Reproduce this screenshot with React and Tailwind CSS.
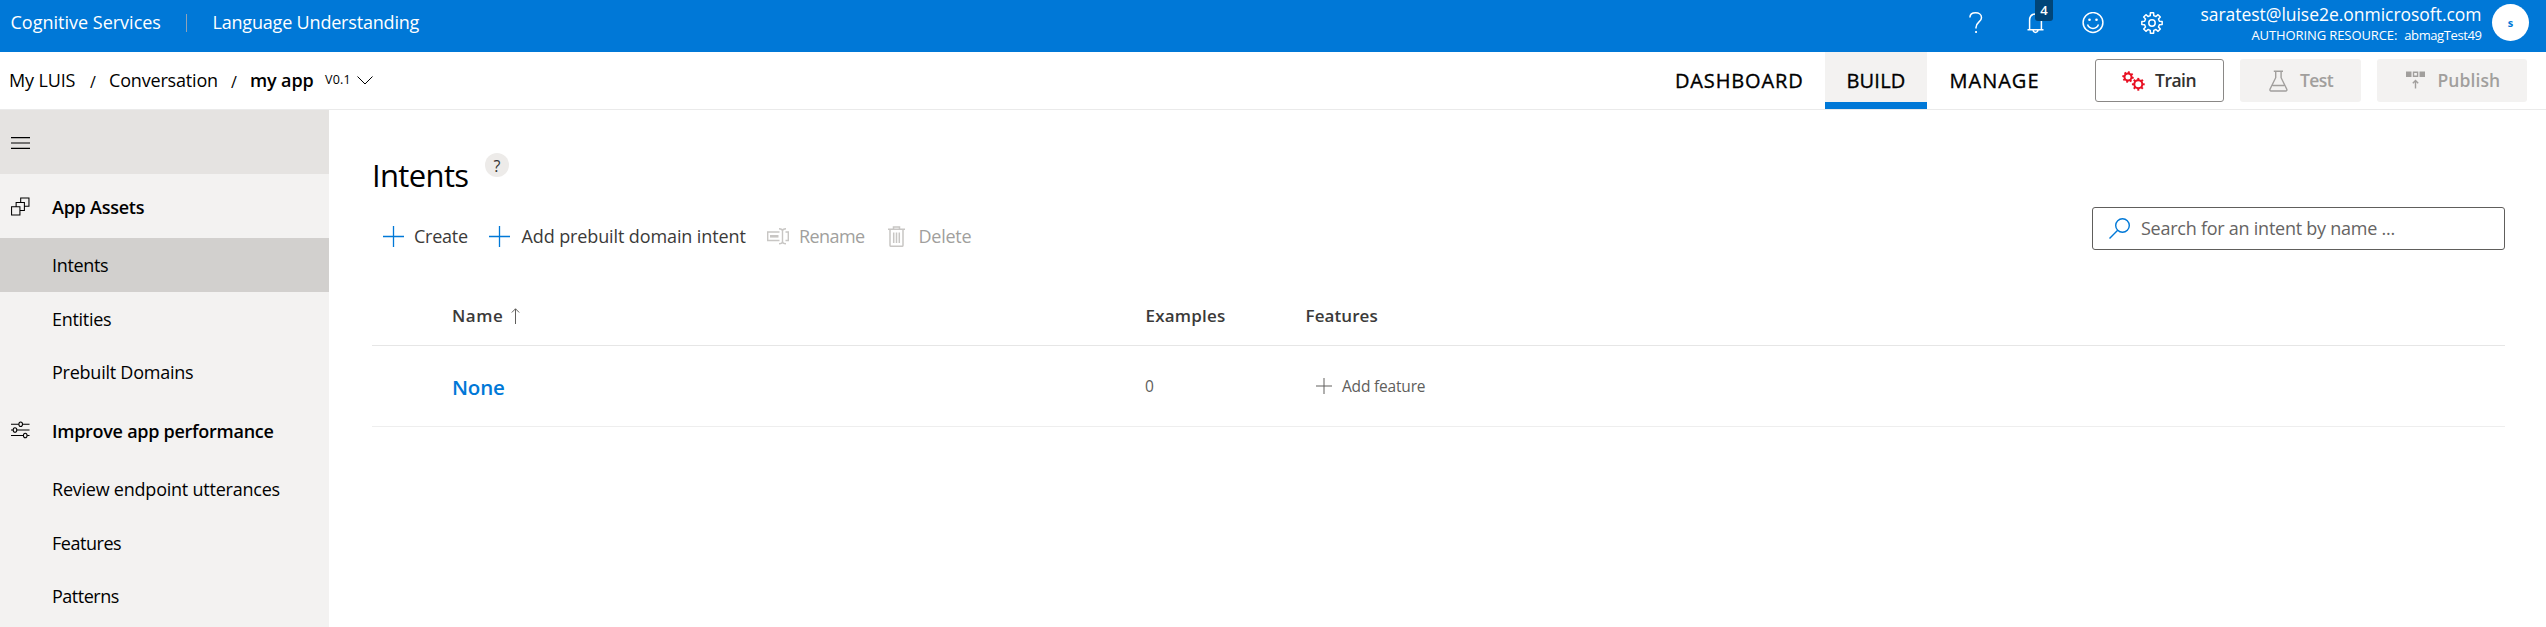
import React from "react";

function Gear({ className }) {
  const pts = [];
  const step = (Math.PI * 2) / 8;
  for (let i = 0; i < 8; i++) {
    const a = i * step;
    [
      [-0.3, 7.6],
      [-0.2, 10.3],
      [0.2, 10.3],
      [0.3, 7.6],
    ].forEach(([o, r]) => {
      const t = a + o * step;
      pts.push(`${(11 + r * Math.sin(t)).toFixed(2)},${(11 - r * Math.cos(t)).toFixed(2)}`);
    });
  }
  return (
    <svg viewBox="0 0 22 22" className={className} fill="none" stroke="currentColor" strokeWidth="1.5" strokeLinejoin="round">
      <polygon points={pts.join(" ")} />
      <circle cx="11" cy="11" r="3.2" />
    </svg>
  );
}

function TrainIcon() {
  const teeth = [0, 45, 90, 135, 180, 225, 270, 315];
  return (
    <svg viewBox="0 0 23 20" className="h-5 w-[23px] text-[#e81123]" fill="none" stroke="currentColor" strokeWidth="2">
      <circle cx="6" cy="6" r="3.500" />
      {teeth.map((a) => (
        <path key={a} d="M6 2.500V0.300" transform={`rotate(${a + 10} 6 6)`} />
      ))}
      <circle cx="16.300" cy="13.300" r="4" />
      {teeth.map((a) => (
        <path key={a} d="M16.300 9.300V6.900" transform={`rotate(${a} 16.300 13.300)`} />
      ))}
    </svg>
  );
}

function Plus({ className }) {
  return (
    <svg viewBox="0 0 21 21" className={className} fill="none" stroke="currentColor" strokeWidth="1.3">
      <path d="M10.5 0v21M0 10.5h21" />
    </svg>
  );
}

function Header() {
  return (
    <header className="flex h-[52px] bg-[#0078d7] text-white">
      <div className="flex h-11 flex-1 items-center pl-[10.500px] text-[18px]">
        <span className="w-[175.500px]">Cognitive Services</span>
        <span className="mt-[2px] h-[18px] w-px bg-[#8fa3b8]" />
        <span className="ml-[25.500px] tracking-[-0.19px]">Language Understanding</span>
      </div>
      <div className="flex pt-3">
        <svg viewBox="0 0 14 22" className="mr-[44px] h-[22px] w-[14px]" fill="none" stroke="currentColor" strokeWidth="1.5">
          <path d="M.9 5.4C1 2.400 3.400.8 6.600.8s5.900 1.800 5.900 4.900c0 4.300-5.500 4.300-5.500 9.800v1.100" />
          <path d="M6.200 20h1.700" strokeWidth="1.800" />
        </svg>
        <div className="relative mr-[38px] h-[22px] w-[17px]">
          <svg viewBox="0 0 17 22" className="h-[22px] w-[17px]" fill="none" stroke="currentColor" strokeWidth="1.5">
            <path d="M.5 17.800h16M2.600 17.800V8.500C2.600 4.500 5 2 8.500 2s5.900 2.500 5.900 6.500v9.300M6 18.200c.3 1.400 1.300 2.200 2.500 2.200s2.200-.8 2.500-2.200" />
          </svg>
          <span className="absolute -top-3 left-[8px] flex h-[21px] w-[18px] items-center justify-center rounded-b-[3px] bg-[#004578] text-[13px] font-semibold">4</span>
        </div>
        <svg viewBox="0 0 22 22" className="mr-[37px] h-[22px] w-[22px]" fill="none" stroke="currentColor" strokeWidth="1.5">
          <circle cx="11" cy="10.500" r="9.900" />
          <path d="M5.500 12.500c1 2.600 3 3.900 5.500 3.900s4.500-1.300 5.500-3.900" />
          <circle cx="7.500" cy="7.800" r="1.300" fill="currentColor" stroke="none" />
          <circle cx="14.500" cy="7.800" r="1.300" fill="currentColor" stroke="none" />
        </svg>
        <Gear className="mr-[37px] h-[22px] w-[22px]" />
      </div>
      <div className="flex w-[281.500px] flex-col items-end pt-1">
        <span className="whitespace-nowrap text-[17.5px] leading-5 tracking-[-0.03px]">saratest@luise2e.onmicrosoft.com</span>
        <div className="flex gap-[7px] whitespace-nowrap text-[13px] leading-[22px]">
          <span className="tracking-[-0.1px]">AUTHORING RESOURCE:</span>
          <span className="tracking-[-0.4px]">abmagTest49</span>
        </div>
      </div>
      <div className="ml-[10.500px] mr-[17px] mt-1 flex h-[37px] w-[37px] items-center justify-center rounded-full bg-white pt-[2px] text-[11px] font-bold text-[#0078d7]">s</div>
    </header>
  );
}

function NavBar() {
  return (
    <nav className="flex h-[58px] border-b border-[#eaeaea] bg-white text-black">
      <div className="flex flex-1 items-center pl-[9px] text-[18px]">
        <span className="w-[81px] tracking-[-0.15px]">My LUIS</span>
        <span className="w-[19px] pt-[2px] text-[16px]">/</span>
        <span className="w-[122px] tracking-[-0.18px]">Conversation</span>
        <span className="w-[19px] pt-[2px] text-[16px]">/</span>
        <span className="w-[75px] font-semibold tracking-[-0.13px]">my app</span>
        <span className="w-[31.500px] text-[12.5px] tracking-[0.2px]">V0.1</span>
        <svg viewBox="0 0 16 9" className="mt-[-1px] h-[9px] w-4" fill="none" stroke="currentColor" strokeWidth="1">
          <path d="M.5.5 8 8 15.500.5" />
        </svg>
      </div>
      <div className="flex text-[20px] font-medium leading-[57px] [-webkit-text-stroke:0.35px_black]">
        <span className="w-[150px] tracking-[0.85px]">DASHBOARD</span>
        <span className="flex h-[57px] w-[102px] justify-center border-b-[7px] border-[#0078d7] bg-[#f3f2f1] tracking-[0.24px]">BUILD</span>
        <span className="w-[168px] pl-[22.500px] tracking-[1px]">MANAGE</span>
      </div>
      <div className="mr-[19px] flex gap-4 pt-[7px] text-[17.5px] font-semibold">
        <div className="flex h-[43px] w-[129px] items-center rounded-[3px] border border-[#8a8886] pl-[26px] text-[#323130]">
          <TrainIcon />
          <span className="ml-[10px] tracking-[-0.49px]">Train</span>
        </div>
        <div className="flex h-[43px] w-[121px] items-center rounded-[3px] bg-[#f3f2f1] pl-[29px] text-[#a19f9d]">
          <svg viewBox="0 0 19 22" className="h-[22px] w-[19px]" fill="none" stroke="currentColor" strokeWidth="1.4">
            <path d="M4.800 1.200h9.200M6.700 1.200v6.500L1 19.300c-.3.900.1 1.700 1 1.700h14.800c.9 0 1.300-.8 1-1.700L12.100 7.700V1.200M3.700 15.500h11.400" />
          </svg>
          <span className="ml-[12px] tracking-[-0.6px]">Test</span>
        </div>
        <div className="flex h-[43px] w-[150px] items-center rounded-[3px] bg-[#f3f2f1] pl-[29px] text-[#a19f9d]">
          <svg viewBox="0 0 20 18" className="mt-[-2px] h-[18px] w-5" fill="none" stroke="currentColor" strokeWidth="1.400">
            <path d="M0 .5h5.500v5.500H0zM13.500.5H19v5.500h-5.500z" fill="currentColor" stroke="none" />
            <path d="M7.500 1.200h4.100v4.100H7.500zM9.500 17.500V9.500M6.800 12.200l2.700-2.700 2.700 2.700" />
          </svg>
          <span className="ml-[11.500px] tracking-[0.08px]">Publish</span>
        </div>
      </div>
    </nav>
  );
}

function Sidebar() {
  return (
    <aside className="h-[517px] w-[329px] bg-[#f3f2f1] text-[18px] text-black">
      <div className="flex h-16 items-center bg-[#e5e3e1] pl-[11px]">
        <svg viewBox="0 0 19 12" className="mt-[2px] h-3 w-[19px]" stroke="currentColor" strokeWidth="1.1">
          <path d="M0 .6h19M0 6h19M0 11.400h19" />
        </svg>
      </div>
      <div className="flex h-16 items-center pl-[11px] pt-[2px]">
        <svg viewBox="0 0 20 19" className="mt-[-2px] h-[19px] w-[19px]" fill="none" stroke="currentColor" strokeWidth="1.100">
          <path d="M.6 9.800h8.800v8.600H.6zM5.400 9.800V5.200h8.700v8.600H9.400M10.200 5.200V.6h8.700v8.600h-4.800" />
        </svg>
        <span className="ml-[22px] font-semibold tracking-[-0.25px]">App Assets</span>
      </div>
      <div className="flex h-[54px] items-center bg-[#d2d0ce] pl-[52px] tracking-[-0.34px]">Intents</div>
      <div className="flex h-[54px] items-center pl-[52px] tracking-[-0.3px]">Entities</div>
      <div className="flex h-[53px] items-center pl-[52px] tracking-[-0.24px]">Prebuilt Domains</div>
      <div className="flex h-[65px] items-center pl-[11px]">
        <svg viewBox="0 0 20 18" className="mt-[-3px] h-[18px] w-[19px]" fill="none" stroke="currentColor" strokeWidth="1.100">
          <path d="M0 3h8.300M12.200 3H19.500M0 9h2.300M6 9h13.500M0 14.800h13M17 14.800h2.500" />
          <ellipse cx="10.200" cy="3" rx="1.900" ry="2.400" />
          <ellipse cx="4.200" cy="9" rx="1.900" ry="2.400" />
          <ellipse cx="15" cy="14.800" rx="1.900" ry="2.400" />
        </svg>
        <span className="ml-[22px] font-semibold tracking-[-0.27px]">Improve app performance</span>
      </div>
      <div className="flex h-[52px] items-center pb-px pl-[52px] tracking-[-0.23px]">Review endpoint utterances</div>
      <div className="flex h-[54px] items-center pl-[52px] tracking-[-0.47px]">Features</div>
      <div className="flex h-[53px] items-center pl-[52px] tracking-[-0.5px]">Patterns</div>
    </aside>
  );
}

function Toolbar() {
  return (
    <div className="flex h-[43px] items-center pl-[11px] text-[18px] text-[#3b3a39]">
      <Plus className="h-[21px] w-[21px] text-[#0078d7]" />
      <span className="ml-[10px] w-[75px] tracking-[-0.24px]">Create</span>
      <Plus className="h-[21px] w-[21px] text-[#0078d7]" />
      <span className="ml-[11.500px] w-[245px] whitespace-nowrap tracking-[-0.11px]">Add prebuilt domain intent</span>
      <svg viewBox="0 0 22 17" className="h-[17px] w-[22px] text-[#c8c6c4]" fill="none" stroke="currentColor" strokeWidth="1.4">
        <path d="M12.500 4H.7v8.500h11.800M18.500 4h2.800v8.500h-2.800" />
        <path d="M3 8.300h8.500" strokeWidth="2.600" />
        <path d="M12 .8c2 0 3.500.6 3.500 2.200v10.500c0 1.600-1.500 2.300-3.500 2.300M19 .8c-2 0-3.500.6-3.500 2.200v10.500c0 1.600 1.500 2.300 3.500 2.300" />
      </svg>
      <span className="ml-[10.500px] w-[89px] tracking-[-0.58px] text-[#a19f9d]">Rename</span>
      <svg viewBox="0 0 17 21" className="h-[21px] w-[17px] text-[#c8c6c4]" fill="none" stroke="currentColor" strokeWidth="1.500">
        <path d="M0 3.200h17M5.500 3V1h6v2M2 3.500v15.700c0 .7.400 1.100 1.100 1.100h10.800c.7 0 1.100-.4 1.100-1.100V3.500M5.700 6.500v10.500M8.500 6.500v10.500M11.300 6.500v10.500" />
      </svg>
      <span className="ml-[13.500px] tracking-[-0.25px] text-[#a19f9d]">Delete</span>
    </div>
  );
}

function IntentsPage() {
  return (
    <main className="flex-1 bg-white pl-[43px] pr-[41px] pt-[43px]">
      <div className="flex justify-between">
        <div>
          <div className="mb-2 flex h-[54px]">
            <h1 className="w-[113px] text-[31px] font-normal leading-[44px] tracking-[-0.65px] text-black">Intents</h1>
            <span className="flex h-6 w-6 items-center justify-center rounded-full bg-[#edebe9] pt-px text-[16px] text-[#323130]">?</span>
          </div>
          <Toolbar />
        </div>
        <div className="mt-[54px] flex h-[43px] w-[413px] items-center rounded-[3px] border border-[#605e5c] pl-4 text-[18px] text-[#666463]">
          <svg viewBox="0 0 21 21" className="h-[21px] w-[21px] text-[#0078d7]" fill="none" stroke="currentColor" strokeWidth="1.400">
            <circle cx="13.500" cy="7.500" r="6.800" />
            <path d="M8.700 12.300.5 20.500" />
          </svg>
          <span className="ml-[11px] tracking-[-0.25px]">Search for an intent by name ...</span>
        </div>
      </div>
      <div className="mt-[26px] flex h-[62px] items-center border-b border-[#e6e6e6] pl-[80px] pt-[2px] text-[17px] font-semibold text-[#3b3a39]">
        <span className="w-[59px] tracking-[0.5px]">Name</span>
        <svg viewBox="0 0 9 16" className="mr-[625.500px] h-4 w-[9px] text-[#605e5c]" fill="none" stroke="currentColor" strokeWidth="1.000">
          <path d="M4.500 16V.8M.8 4.500 4.500.8l3.700 3.700" />
        </svg>
        <span className="w-[160px] tracking-[0.22px]">Examples</span>
        <span className="tracking-[0.09px]">Features</span>
      </div>
      <div className="flex h-[81px] items-center border-b border-[#eeeeee] pl-[80px] text-[15.500px] text-[#605e5c]">
        <a className="w-[693px] pt-[2px] text-[20.500px] font-semibold tracking-[-0.2px] text-[#0078d7]">None</a>
        <span className="w-[171px] pt-[2px]">0</span>
        <Plus className="mt-[-1px] h-[16px] w-[16px]" />
        <span className="ml-[10px] pt-[2px] tracking-[-0.19px]">Add feature</span>
      </div>
    </main>
  );
}

export default function App() {
  return (
    <div className="h-[627px] w-[2546px] overflow-hidden bg-white font-['Open_Sans','Noto_Sans',sans-serif]">
      <Header />
      <NavBar />
      <div className="flex">
        <Sidebar />
        <IntentsPage />
      </div>
    </div>
  );
}
